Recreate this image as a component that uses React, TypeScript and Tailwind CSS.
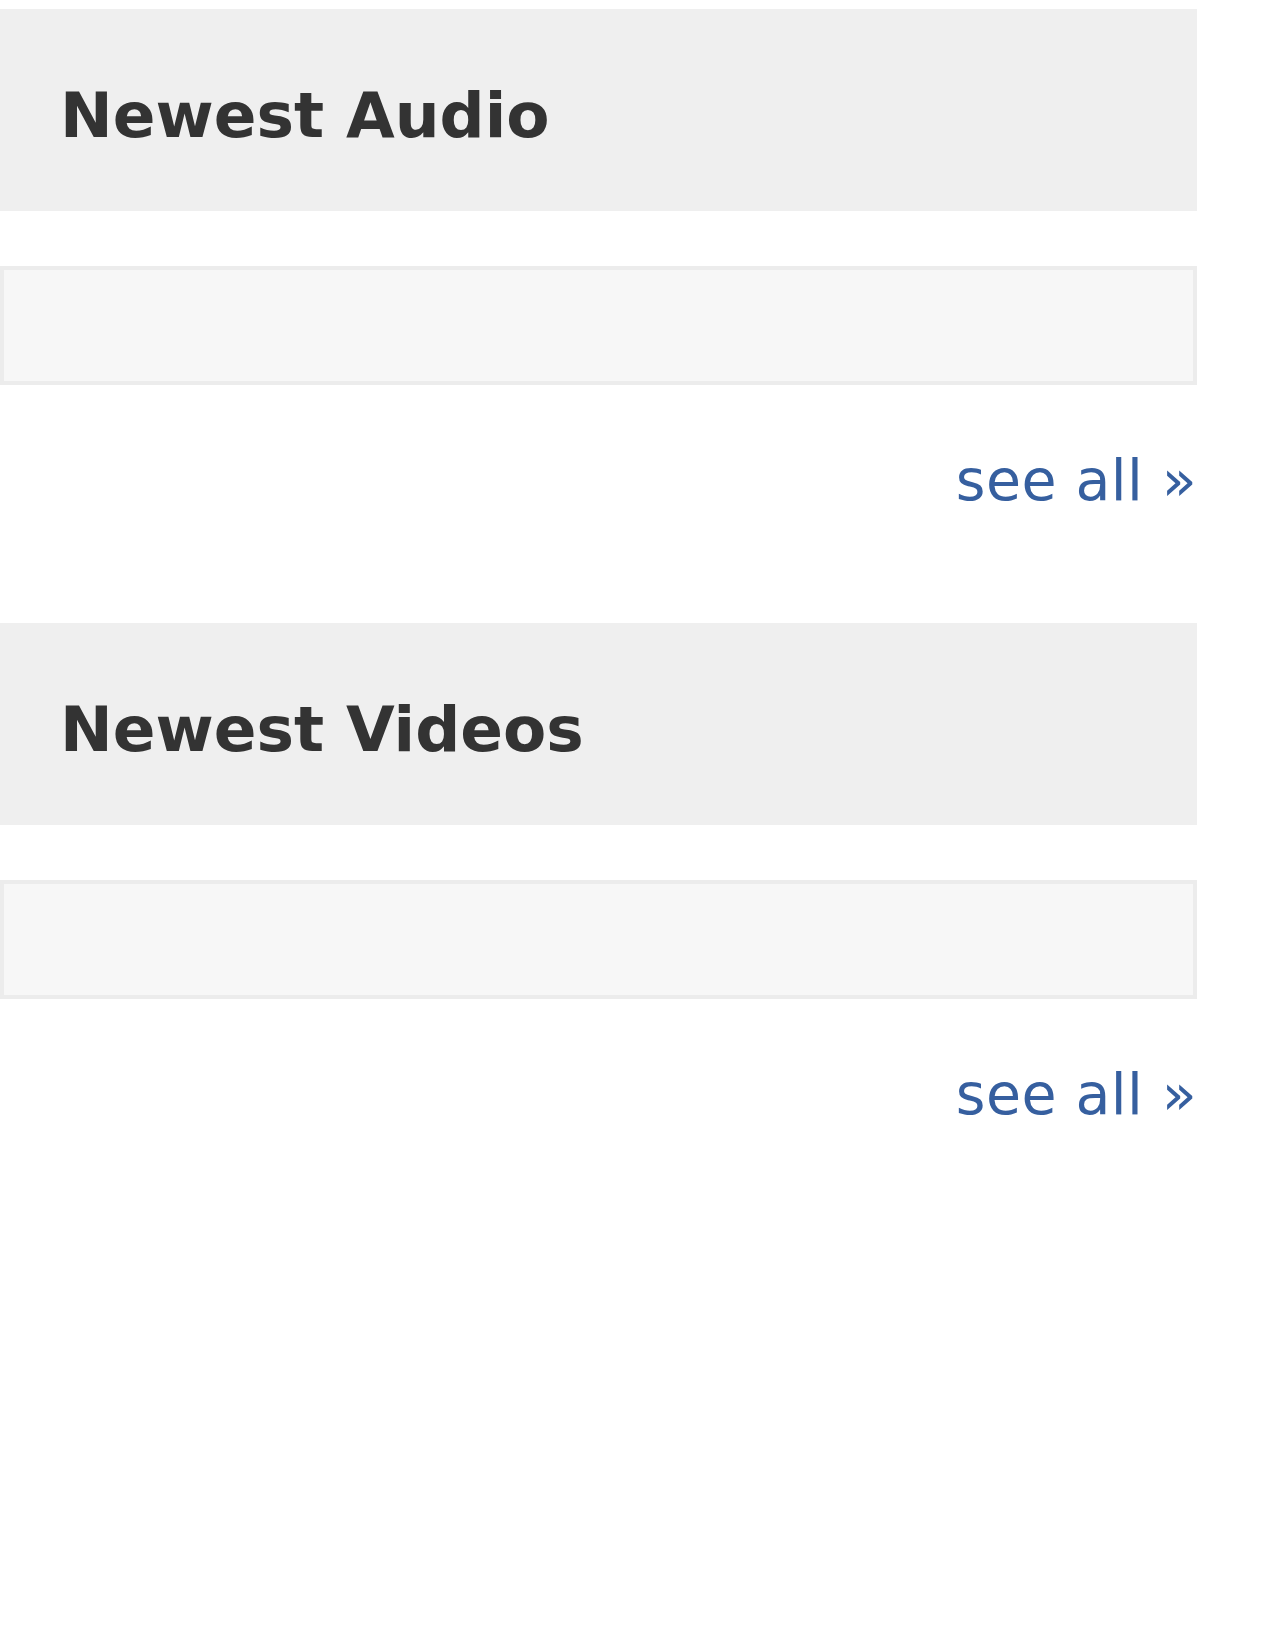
import React from "react";

function Section({ title }: { title: string }) {
  return (
    <div className="flex flex-col">
      <div className="h-[202px] bg-[#efefef] pt-[75px] pl-[60px]">
        <h2
          className="text-[63px] leading-[63px] font-bold text-[#333333] m-0"
          style={{ fontFamily: '"DejaVu Sans", Verdana, sans-serif' }}
        >
          {title}
        </h2>
      </div>
      <div className="mt-[55px] h-[119px] border-4 border-[#ececec] bg-[#f7f7f7]" />
      <div className="mt-[67px] flex justify-end">
        <a
          href="#"
          className="text-[57px] leading-[57px] tracking-[0.4px] text-[#365f9f] no-underline"
          style={{ fontFamily: '"DejaVu Sans", Verdana, sans-serif' }}
        >
          see all »
        </a>
      </div>
    </div>
  );
}

export default function App() {
  return (
    <div className="min-h-[1642px] w-[1280px] bg-white pt-[9px]">
      <div className="w-[1197px] flex flex-col gap-[114px]">
        <Section title="Newest Audio" />
        <Section title="Newest Videos" />
      </div>
    </div>
  );
}
